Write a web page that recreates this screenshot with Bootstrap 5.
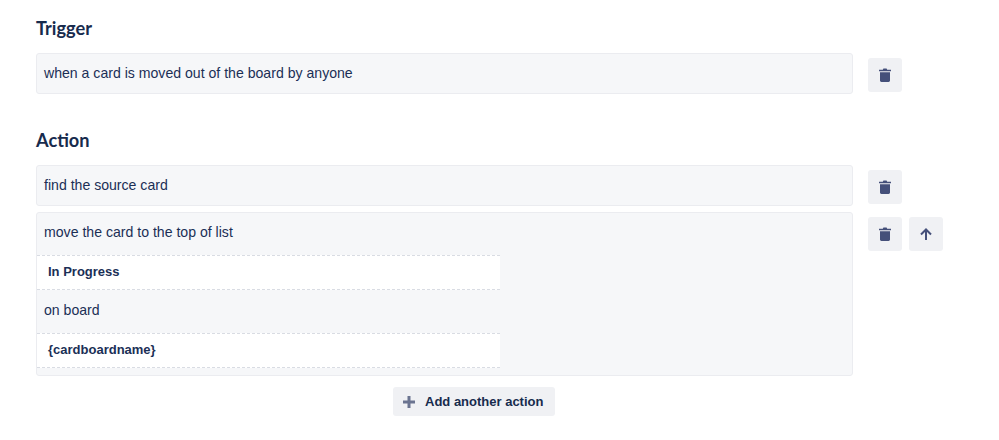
<!DOCTYPE html>
<html lang="en">
<head>
<meta charset="utf-8">
<title>Rule</title>
<link rel="stylesheet" href="https://cdn.jsdelivr.net/npm/bootstrap@5.3.0/dist/css/bootstrap.min.css">
<style>
body { background:#fff; color:#1b2f56; font-family:"Liberation Sans",Arial,sans-serif; font-size:14.1px; }
.rule-page { padding:15px 0 0 36px; width:999px; }
.rule-title { font-family:Lato,sans-serif; font-weight:700; font-size:18.2px; line-height:26px; color:#172b4d; margin:0 0 12px; }
.rule-title-second { margin-top:33px; margin-bottom:12px; }
.rule-main { width:817px; flex:none; }
.rule-box { background:#f6f7f9; border:1px solid #ebecf0; border-radius:3px; min-height:41px; padding:0 7px; }
.rule-line { line-height:39px; height:39px; }
.rule-tools { margin-left:15px; padding-top:5px; gap:7px; }
.rule-btn { width:34px; height:34px; padding:0; border:0; border-radius:3px; background:#f0f1f4; display:flex; align-items:center; justify-content:center; }
.rule-field { width:463px; margin-left:-7px; height:35px; background:#fff; border-top:1px dashed #d9dce3; border-bottom:1px dashed #d9dce3; padding-left:11px; line-height:32px; font-weight:700; font-size:13px; }
.rule-field-first { margin-top:3px; }
.rule-mid { height:43px; line-height:41px; }
.rule-end { height:7px; }
.rule-next { margin-top:6px; }
.rule-add { width:162px; height:29px; padding:0 0 0 10px; border:0; border-radius:3px; background:#f0f1f4; color:#172b4d; font-weight:700; font-size:13px; gap:10px; margin-left:357px; margin-top:11px; }
</style>
</head>
<body>
<div class="rule-page">
  <h2 class="rule-title">Trigger</h2>
  <div class="d-flex align-items-start">
    <div class="rule-main rule-box"><div class="rule-line">when a card is moved out of the board by anyone</div></div>
    <div class="rule-tools d-flex">
      <button class="rule-btn" type="button" aria-label="Delete"><svg width="12" height="14" viewBox="0 0 12 14"><path fill="#45507a" d="M0 1.8h3.8L4.4.6h3.2l.6 1.2H12v1.500H0zM1 4.200h10v8.300c0 .9-.6 1.400-1.400 1.400H2.400c-.8 0-1.400-.5-1.400-1.400z"/></svg></button>
    </div>
  </div>

  <h2 class="rule-title rule-title-second">Action</h2>
  <div class="d-flex align-items-start">
    <div class="rule-main rule-box"><div class="rule-line">find the source card</div></div>
    <div class="rule-tools d-flex">
      <button class="rule-btn" type="button" aria-label="Delete"><svg width="12" height="14" viewBox="0 0 12 14"><path fill="#45507a" d="M0 1.8h3.8L4.4.6h3.2l.6 1.2H12v1.500H0zM1 4.200h10v8.300c0 .9-.6 1.400-1.400 1.400H2.400c-.8 0-1.400-.5-1.400-1.400z"/></svg></button>
    </div>
  </div>
  <div class="d-flex align-items-start rule-next">
    <div class="rule-main rule-box">
      <div class="rule-line">move the card to the top of list</div>
      <div class="rule-field rule-field-first">In Progress</div>
      <div class="rule-mid">on board</div>
      <div class="rule-field">{cardboardname}</div>
      <div class="rule-end"></div>
    </div>
    <div class="rule-tools d-flex">
      <button class="rule-btn" type="button" aria-label="Delete"><svg width="12" height="14" viewBox="0 0 12 14"><path fill="#45507a" d="M0 1.8h3.8L4.4.6h3.2l.6 1.2H12v1.500H0zM1 4.200h10v8.300c0 .9-.6 1.400-1.400 1.400H2.400c-.8 0-1.400-.5-1.400-1.400z"/></svg></button>
      <button class="rule-btn" type="button" aria-label="Move up"><svg width="12" height="12" viewBox="0 0 12 12"><path fill="none" stroke="#45507a" stroke-width="2" d="M6 12V2M1 6.500 6 1.500l5 5"/></svg></button>
    </div>
  </div>
  <button class="rule-add d-flex align-items-center" type="button"><svg width="12" height="12" viewBox="0 0 12 12"><path fill="#6b7490" d="M4.500 0h3v4.500H12v3H7.500V12h-3V7.500H0v-3h4.500z"/></svg><span>Add another action</span></button>
</div>
</body>
</html>
